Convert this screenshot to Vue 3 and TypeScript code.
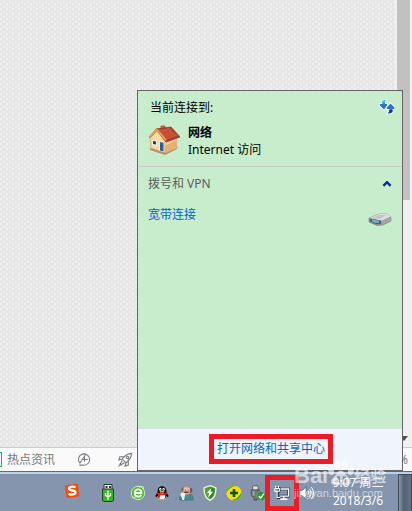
<script setup lang="ts">
import { ref } from 'vue'

const vpnExpanded = ref(true)
const time = '9:07 周二'
const date = '2018/3/6'
</script>

<template>
  <div class="desktop">
    <main class="browser">
      <div class="page"></div>
      <div class="scrollbar">
        <div class="thumb"></div>
        <svg class="scroll-arrow" viewBox="0 0 8 5"><path d="M0 0h8L4 5z" fill="#505050" /></svg>
      </div>
    </main>

    <footer class="statusbar">
      <span class="feed-icon"></span>
      <a class="feed" href="#">热点资讯</a>
      <button class="status-btn" aria-label="加速">
        <svg viewBox="0 0 16 16" fill="none" stroke="#777b80" stroke-width="1.1">
          <path d="M3.2 12.2A6 6 0 1 1 7 14H2.5M3 12 9 3M8 4.5v6M5.5 8h6" />
        </svg>
      </button>
      <button class="status-btn rocket" aria-label="火箭">
        <svg viewBox="0 0 16 16" fill="none" stroke="#777b80" stroke-width="1.2">
          <path d="M4.500 7.500C7 4 9.500 2 14.500 1.500c-.3 5-2.500 7.500-6 10zM6.500 5H2L1 8.500l3.500-1M11 9.500V14l-3.500 1 1-3.500M4.500 9 1.500 14.500 7 11.500M2 12l2 2" />
          <circle cx="10.200" cy="5.800" r="1.300" />
        </svg>
      </button>
      <span class="zoom">%</span>
    </footer>

    <nav class="taskbar" aria-label="任务栏">
      <div class="tray">
        <button class="tray-btn first" aria-label="搜狗输入法">
          <svg viewBox="0 0 18 18">
            <path d="M2.500 2.200 14 .8q1.500-.2 1.800 1.200l1.400 11.500q.1 1.500-1.300 1.800L4.500 17q-1.500.1-1.800-1.300L1 4q-.1-1.500 1.500-1.800z" fill="#f54b0c" />
            <path d="M13 4.800C9.500 3.500 5.500 4.200 5.500 6.300c0 2.800 7.500 1.500 7.500 4.200 0 2.500-4.500 3-8 1.800" fill="none" stroke="#fff" stroke-width="2.600" />
          </svg>
        </button>
        <button class="tray-btn usb" aria-label="U盘">
          <svg viewBox="0 0 18 18">
            <path d="M5 .5h8v5H5z" fill="#f2f2f2" stroke="#292d30" />
            <path d="M6.500 2h2v2h-2zM10 2h2v2h-2z" fill="#333" />
            <path d="M3.500 5h11v11l-1 1.500h-9l-1-1.500z" fill="#35b81f" stroke="#263e25" />
            <path d="M9 7v9M6.500 9v2.500L9 13l2.500-1.500V9" fill="none" stroke="#fff" stroke-width="1.300" />
            <path d="m9 6-1.500 2h3z" fill="#fff" />
          </svg>
        </button>
        <button class="tray-btn" aria-label="浏览器">
          <svg viewBox="0 0 18 18">
            <circle cx="9" cy="9" r="7.500" fill="#4dba27" stroke="#d9f6ca" />
            <path d="M5.500 9h7.500c.2-5.500-7.500-5.500-7.700 0-.1 5 5.700 5.500 7.500 2" fill="none" stroke="#fff" stroke-width="2" />
            <path d="M2 13c1 3 5 .5 8-2M10 2.500c4-2 6-.5 5 2" fill="none" stroke="#e1f7ce" />
          </svg>
        </button>
        <button class="tray-btn" aria-label="QQ">
          <svg viewBox="0 0 18 18">
            <path d="M4 16.500q2-1.800 4.500 0H3zM9.500 16.500q2-1.800 5 0z" fill="#f7a600" stroke="#ee9b00" />
            <path d="M4 8C3.500-.8 14.500-.8 14 8l2.500 4.500-1 1.200-1.700-1.500c0 5-9.500 5-9.500 0l-1.800 1.500-1-1.200z" fill="#080808" />
            <ellipse cx="9" cy="12.500" rx="3.700" ry="3.600" fill="#fff" />
            <ellipse cx="7.200" cy="4.800" rx="1.300" ry="1.800" fill="#fff" /><ellipse cx="10.800" cy="4.800" rx="1.300" ry="1.800" fill="#fff" />
            <path d="M7.500 4.500h.8v1.200h-.8zM10 4.500h.8v1.200H10z" />
            <ellipse cx="9" cy="7.500" rx="2.800" ry="1" fill="#ffae00" />
            <path d="M3.500 8q5.500 3 11 0l.5 2q-4 2-8 1.500V14H4.800v-3L3 10z" fill="#ef171d" />
          </svg>
        </button>
        <button class="tray-btn" aria-label="头像">
          <svg viewBox="0 0 18 18">
            <path d="M2 17c-1-3 1-6 5-6l5-1c4 .2 5 3 5 7z" fill="#448e91" stroke="#28666b" stroke-width=".6" />
            <path d="M5 3C7 .5 12 .5 13.500 3.500L14 9q-2 3-6 2L5 8z" fill="#dca88b" stroke="#9c6858" stroke-width=".6" />
            <path d="M4 4 6 2v4L4 7zM13 3l3 1v4l-2 1z" fill="#685a57" />
            <path d="M7.500 4h2v2h-2zM11 4h2v2h-2z" fill="#fff" /><path d="M8 5h1v1H8zM11.500 5h1v1h-1z" fill="#222" />
            <path d="M6 8q3-2 7 0l-2 1H7z" fill="#794039" />
            <circle cx="5.500" cy="11" r="2.700" fill="#f4f1eb" /><path d="m4 13 1 4h2l.5-4z" fill="#eee" />
          </svg>
        </button>
        <button class="tray-btn" aria-label="安全卫士">
          <svg viewBox="0 0 18 18">
            <path d="M9 .8 15.500 3c.5 7-1 11.500-6.500 14.200C3.500 14.500 2 10 2.500 3z" fill="#51a42e" stroke="#eef6df" stroke-width="1.500" />
            <path d="M9 2.500 14 4c.2 5-1 9-5 11.300z" fill="#37851f" />
            <path d="M10.500 3.500 5.500 9H8l-1 5 5.500-6.500H9.700z" fill="#fff" />
          </svg>
        </button>
        <button class="tray-btn" aria-label="杀毒">
          <svg viewBox="0 0 18 18">
            <circle cx="9" cy="9" r="8.500" fill="#f9e00a" />
            <path d="M.5 9C1.500 1.500 8-1 13.500 1.500 8 1 4 3 .5 9zM17.500 8c0 7.500-6 11-11.500 9C11 16.500 14 14 17.500 8z" fill="#47ae20" />
            <path d="M7.500 4.500h3v3h3v3h-3v3h-3v-3h-3v-3h3z" fill="#0b5615" />
          </svg>
        </button>
        <button class="tray-btn" aria-label="安全删除硬件">
          <svg viewBox="0 0 18 18">
            <path d="M3 1h6v5H3z" fill="#e2e2e2" stroke="#5b5b5b" /><path d="M1.500 5.500h9V12L8 14v3H4.500v-3l-3-2z" fill="#777" stroke="#4d4d4d" />
            <path d="M3 7h2v5H3z" fill="#aaa" />
            <circle cx="12.500" cy="12.500" r="5" fill="#19972a" stroke="#72c77b" stroke-width=".6" />
            <path d="m9.800 12.500 2.200 2.300 3.500-5" fill="none" stroke="#fff" stroke-width="1.700" />
          </svg>
        </button>
        <button class="tray-btn marked" aria-label="网络">
          <svg viewBox="0 0 18 18">
            <path d="M7 4.500h9.500v8H5" fill="none" stroke="#26323d" stroke-width="3" />
            <path d="M7 4.500h9.500v8H6M11 13v3M7 16h8" fill="none" stroke="#fff" stroke-width="1.500" />
            <path d="M1 3.500h5V7L4.500 8.500v6H7" fill="none" stroke="#26323d" stroke-width="2.500" />
            <path d="M2 1v3M5 1v3M1 4h5v3H1zM3.500 7v7H7" fill="none" stroke="#fff" stroke-width="1.200" />
          </svg>
        </button>
        <button class="tray-btn volume" aria-label="音量">
          <svg viewBox="0 0 18 18">
            <path d="M2 6h3l4-4v14l-4-4H2z" fill="#fff" stroke="#405066" stroke-width=".8" />
            <path d="M11 6.500q2 2.500 0 5M13 4.500q3.500 4.500 0 9M15 2.500q5 6.500 0 13" fill="none" stroke="#fff" stroke-width="1.100" />
          </svg>
        </button>
      </div>
      <button class="clock"><span>{{ time }}</span><span>{{ date }}</span></button>
      <button class="show-desktop" aria-label="显示桌面"></button>
    </nav>

    <section class="flyout" aria-label="网络连接">
      <header class="current">
        <div class="heading">
          <span>当前连接到:</span>
          <button class="refresh" aria-label="刷新">
            <svg viewBox="0 0 16 16">
              <g fill="#2c75c5" stroke="#fff" stroke-width="1.600" paint-order="stroke">
                <path d="M6.500 1 3.500 2v3H.8v1.500L5 10.500l3.200-4V5H6V3z" />
                <path d="M11.500 4.500 7.800 8.500V10h2.500v2L9 14.500l3-.5 1.500-1.500V10h2V8.500z" />
              </g>
              <path d="m6.500 1-3 1v2.500H6V3z" fill="#2abee4" /><path d="M10.300 11h3.200v1.500L12 14l-3 .5 1.300-2z" fill="#203575" />
            </svg>
          </button>
        </div>
        <div class="connection">
          <svg class="house" viewBox="0 0 32 32">
            <path d="m2 26 15 4 14-7-13-4z" fill="#999779" opacity=".45" />
            <path d="M13 5V2h4v4" fill="#d47140" stroke="#843f2b" stroke-width=".7" />
            <path d="M2 13 9 6l8 10v13L3 24z" fill="#f8d9a7" stroke="#d2925f" stroke-width=".6" />
            <path d="m17 16 12-4v12l-12 5z" fill="#e7af75" />
            <path d="M17 17 29 12v4l-12 6z" fill="#f5c793" />
            <path d="m8 5 15-2 9 10-14 5z" fill="#a53c28" stroke="#81372a" stroke-width=".7" />
            <path d="m9 5.500 13-1.500 8 8-12 4z" fill="#c84f33" />
            <path d="M8 5 1 13l1 1 7-7 8 10 2-1L10 5z" fill="#f2a05c" stroke="#ae5a35" stroke-width=".5" />
            <path d="m4 16 5 1v5l-5-1z" fill="#f8f5df" /><path d="m5 17 3 .6v3L5 20z" fill="#283e58" />
            <path d="m11 17 5 1v10l-5-1.500z" fill="#f5ebd2" /><path d="m12 18 3.500.7v8.800L12 26.500z" fill="#285f9e" />
            <path d="m2 24 15 5 12-5v1l-12 6-15-5z" fill="#b9905e" />
          </svg>
          <div><strong>网络</strong><span>Internet 访问</span></div>
        </div>
      </header>
      <div class="dialup">
        <button class="group" :aria-expanded="vpnExpanded" @click="vpnExpanded = !vpnExpanded">
          <span>拨号和 VPN</span>
          <svg viewBox="0 0 8 5"><path d="m1 4 3-3 3 3" fill="none" stroke="#05309a" stroke-width="2" /></svg>
        </button>
        <a v-if="vpnExpanded" class="broadband" href="#">
          <span>宽带连接</span>
          <svg viewBox="0 0 24 14">
            <path d="m1 6 10-4h8l4 3v4l-8 4-6 .5L1 10z" fill="#8d8e8d" stroke="#7e8280" stroke-width=".6" />
            <path d="m1 6 10-4h8l4 2.500L13 9z" fill="#dedede" /><path d="m3 6 8-3h7l-6 4z" fill="#c5c5c5" />
            <path d="m2 6.500 11 2V12H8L2 9.500z" fill="#4b6875" /><path d="m4 7.500 7 1.300v2H7L4 9.500z" fill="#75b0c5" />
            <path d="m13 9 10-4v3.500l-9 4.500z" fill="#a6a6a6" />
          </svg>
        </a>
      </div>
      <footer class="flyout-footer"><a class="center-link" href="#">打开网络和共享中心</a></footer>
    </section>

    <div class="watermark" aria-hidden="true">
      <div class="brand">
        <span class="latin">Bai</span>
        <svg viewBox="0 0 32 32" fill="#fff">
          <ellipse cx="4" cy="14" rx="3.500" ry="5" transform="rotate(-15 4 14)" /><ellipse cx="11.500" cy="6" rx="3.700" ry="5.500" />
          <ellipse cx="20.500" cy="6" rx="3.700" ry="5.500" /><ellipse cx="28" cy="14" rx="3.500" ry="5" transform="rotate(15 28 14)" />
          <path fill-rule="evenodd" d="M16 13c4 0 6 6 10 9 5 6 0 10-5 9q-5-1-10 0c-6 1-10-4-5-9 4-3 5-9 10-9zM11 20v8h4v-8zm7 0v8h4v-8z" />
        </svg>
        <span class="cjk">经验</span>
      </div>
      <span class="domain">jingyan.baidu.com</span>
    </div>
  </div>
</template>

<style>
body { margin: 0; }
</style>

<style scoped>
* { box-sizing: border-box; }
.desktop {
  position: relative; display: flex; flex-direction: column; min-height: 100vh; overflow: hidden;
  font: 12px/16px "Noto Sans", "Noto Sans CJK SC", sans-serif; color: #000;
}
button { font: inherit; color: inherit; border: 0; padding: 0; background: none; }
a { text-decoration: none; }
svg { display: block; flex: none; }
.browser { flex: 1; display: flex; }
.page {
  flex: 1;
  background-color: #e6e6e6;
  background-image:
    radial-gradient(circle at 1px 4px, #f1f1f1 1px, transparent 1px),
    radial-gradient(circle at 4px 2px, #eee 1px, transparent 1px),
    radial-gradient(circle at 6px 6px, #ececec 1px, transparent 1px);
  background-size: 6px 5px, 6px 5px, 12px 10px;
}
.scrollbar { display: flex; flex-direction: column; justify-content: space-between; align-items: center; width: 17px; padding-bottom: 6px; background: #f0f0f0; }
.thumb { width: 13px; height: 200px; background: #c1c1c1; }
.scroll-arrow { width: 8px; height: 5px; }
.statusbar { display: flex; align-items: center; height: 25px; border-top: 1px solid #ccc; border-bottom: 1px solid #5f6973; background: #fafafa; color: #777; }
.feed-icon { width: 2px; height: 15px; border: 1px solid #13b763; border-left: 0; }
.feed { margin: 0 22px 0 5px; color: #777; }
.status-btn svg { width: 15px; height: 15px; }
.status-btn.rocket { margin-left: 26px; }
.zoom { margin-left: auto; padding-right: 4px; }
.taskbar { display: flex; height: 39px; background: #8495ad; border-top: 2px solid #bed0e3; }
.tray { display: flex; align-items: center; padding-left: 60px; }
.tray-btn { display: flex; align-items: center; justify-content: center; width: 24px; height: 36px; }
.tray-btn svg { width: 16px; height: 16px; }
.tray-btn.first { padding-bottom: 4px; }
.tray-btn.usb { margin: 0 6px 0 12px; }
.tray-btn.usb svg { width: 18px; height: 18px; }
.tray-btn.marked { width: 34px; margin: 0 -5px; border: 5px solid #ed1c24; }
.clock { flex: 1; display: flex; flex-direction: column; align-items: center; color: #fff; line-height: 18px; }
.show-desktop { width: 14px; border: 1px solid #3d4b5c; border-bottom: 0; background: linear-gradient(90deg, #8996a7, #536173 40%, #627489); }
.flyout { position: absolute; right: 9px; bottom: 40px; width: 266px; height: 381px; display: flex; flex-direction: column; border: 1px solid #646464; background: #c7edcc; }
.current { height: 76px; padding: 6px 7px 0 10px; border-bottom: 1px solid #cbc8cc; }
.heading { display: flex; justify-content: space-between; padding-left: 2px; }
.refresh svg { width: 16px; height: 16px; }
.heading > span { padding-top: 3px; }
.connection { display: flex; gap: 8px; margin-top: 8px; line-height: 17px; }
.connection strong, .connection span { display: block; }
.house { width: 32px; height: 32px; }
.dialup { flex: 1; padding: 9px 10px 0; }
.group { display: flex; align-items: center; justify-content: space-between; width: 100%; color: #5d5d5d; }
.group svg { width: 10px; height: 6px; }
.broadband { display: flex; justify-content: space-between; margin-top: 15px; color: #0066cc; }
.broadband svg { width: 24px; height: 14px; margin-top: 5px; }
.flyout-footer { display: flex; align-items: center; justify-content: center; height: 43px; padding: 0 0 2px 2px; border-top: 2px solid #d4dfee; background: #f0f4fc; }
.center-link { height: 30px; padding: 0 3px; border: 5px solid #ed1c24; color: #0066cc; line-height: 20px; }
.watermark { position: absolute; right: 26px; bottom: 12px; width: 92px; color: #fff; opacity: .6; pointer-events: none; white-space: nowrap; }
.brand { display: flex; align-items: flex-end; height: 30px; }
.brand svg { width: 26px; height: 28px; }
.latin { font: bold 22px/22px "Liberation Sans", sans-serif; }
.cjk { font: bold 16px/24px "Noto Sans CJK SC", sans-serif; }
.domain { display: block; font: 11px/12px "Liberation Sans", sans-serif; }
</style>
